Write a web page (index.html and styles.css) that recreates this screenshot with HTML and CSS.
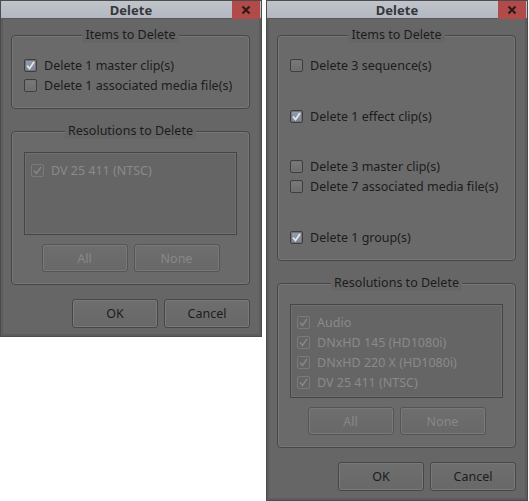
FILE: index.html
```html
<!DOCTYPE html>
<html>
<head>
<meta charset="utf-8">
<link rel="stylesheet" href="styles.css">
</head>
<body>
<div class="page">
  <div class="dialog">
    <div class="titlebar">
      <span class="title">Delete</span>
      <span class="close"><svg width="10" height="10" viewBox="0 0 10 10"><path d="M1.5 1.5 L8.5 8.5 M8.5 1.5 L1.5 8.5" stroke="#2e1c1c" stroke-width="2.2" fill="none"/></svg></span>
    </div>
    <div class="body">
      <div class="group items">
        <div class="group-title">Items to Delete</div>
        <div class="rows">
          <div class="row"><span class="cb checked"></span>Delete 1 master clip(s)</div>
          <div class="row"><span class="cb"></span>Delete 1 associated media file(s)</div>
        </div>
      </div>
      <div class="group res">
        <div class="group-title">Resolutions to Delete</div>
        <div class="list list-short">
          <div class="row disabled"><span class="cb checked"></span>DV 25 411 (NTSC)</div>
        </div>
        <div class="btnrow center">
          <div class="btn disabled">All</div>
          <div class="btn disabled">None</div>
        </div>
      </div>
      <div class="btnrow footer">
        <div class="btn">OK</div>
        <div class="btn">Cancel</div>
      </div>
    </div>
  </div>

  <div class="dialog tall">
    <div class="titlebar">
      <span class="title">Delete</span>
      <span class="close"><svg width="10" height="10" viewBox="0 0 10 10"><path d="M1.5 1.5 L8.5 8.5 M8.5 1.5 L1.5 8.5" stroke="#2e1c1c" stroke-width="2.2" fill="none"/></svg></span>
    </div>
    <div class="body">
      <div class="group items">
        <div class="group-title">Items to Delete</div>
        <div class="rows">
          <div class="row"><span class="cb"></span>Delete 3 sequence(s)</div>
          <div class="spacer s1"></div>
          <div class="row"><span class="cb checked"></span>Delete 1 effect clip(s)</div>
          <div class="spacer s2"></div>
          <div class="row"><span class="cb"></span>Delete 3 master clip(s)</div>
          <div class="row"><span class="cb"></span>Delete 7 associated media file(s)</div>
          <div class="spacer s3"></div>
          <div class="row"><span class="cb checked"></span>Delete 1 group(s)</div>
        </div>
      </div>
      <div class="group res">
        <div class="group-title">Resolutions to Delete</div>
        <div class="list">
          <div class="row disabled"><span class="cb checked"></span>Audio</div>
          <div class="row disabled"><span class="cb checked"></span>DNxHD 145 (HD1080i)</div>
          <div class="row disabled"><span class="cb checked"></span>DNxHD 220 X (HD1080i)</div>
          <div class="row disabled"><span class="cb checked"></span>DV 25 411 (NTSC)</div>
        </div>
        <div class="btnrow center">
          <div class="btn disabled">All</div>
          <div class="btn disabled">None</div>
        </div>
      </div>
      <div class="btnrow footer">
        <div class="btn">OK</div>
        <div class="btn">Cancel</div>
      </div>
    </div>
  </div>
</div>
</body>
</html>
```

FILE: styles.css
```css
* { box-sizing: border-box; }
html, body {
  margin: 0;
  background: #ffffff;
}
body {
  font-family: "Noto Sans", "Open Sans", sans-serif;
  font-size: 12.5px;
  color: #1c1c1c;
}
.page {
  display: flex;
  align-items: flex-start;
  gap: 4px;
}
.dialog {
  width: 262px;
  height: 337px;
  display: flex;
  flex-direction: column;
  background: #666666;
  border: 1px solid #4c4c4c;
}
.dialog.tall {
  height: 501px;
}
.titlebar {
  height: 18px;
  display: grid;
  grid-template-columns: 1fr auto 1fr;
  align-items: center;
  background: linear-gradient(#c0c4cb, #b3b7bf);
  border-bottom: 1px solid #56585c;
}
.title {
  grid-column: 2;
  font-weight: bold;
  font-size: 13px;
  color: #35363a;
  line-height: 18px;
}
.close {
  grid-column: 3;
  justify-self: end;
  margin-right: 1px;
  width: 28px;
  height: 18px;
  margin-top: -1px;
  background: #b34a4a;
  display: flex;
  align-items: center;
  justify-content: center;
}
.body {
  flex: 1;
  display: flex;
  flex-direction: column;
  padding: 16px 11px 0 10px;
  box-shadow: inset 2px 0 0 #5c5c5c, inset -2px 0 0 #5c5c5c, inset 0 -2px 0 #5c5c5c;
}
.group {
  display: flex;
  flex-direction: column;
  background: #6a6a6a;
  border: 1px solid #474747;
  border-radius: 4px;
  box-shadow: inset 0 0 0 1px #777777;
  padding: 0 12px 13px 12px;
}
.group-title {
  align-self: center;
  margin-top: -9px;
  line-height: 16px;
  height: 16px;
  padding: 0 3px;
  background: #666666;
  color: #1c1c1c;
}
.rows {
  margin-top: 12px;
  display: flex;
  flex-direction: column;
}
.row {
  height: 20px;
  display: flex;
  align-items: center;
  gap: 7px;
  white-space: nowrap;
}
.spacer.s1 { height: 31px; }
.spacer.s2 { height: 30px; }
.spacer.s3 { height: 31px; }
.group.res {
  margin-top: 22px;
  padding-bottom: 12px;
}
.cb {
  width: 13px;
  height: 13px;
  flex: none;
  border: 1px solid #3e3e3e;
  border-radius: 2px;
  background: linear-gradient(#7a7a7a, #6c6c6c);
  box-shadow: inset 0 0 0 1px #737373;
}
.cb.checked {
  background-image: url("data:image/svg+xml,%3Csvg xmlns='http://www.w3.org/2000/svg' width='11' height='11' viewBox='0 0 11 11'%3E%3Cpath d='M2 5.5 L4.5 8.5 L9 2' stroke='%23dfe6f0' stroke-width='1.8' fill='none'/%3E%3C/svg%3E"), linear-gradient(#959eae, #7c8494);
  background-repeat: no-repeat;
  background-position: center;
}
.row.disabled {
  color: #8a8a8a;
}
.row.disabled .cb {
  border-color: #7a7a7a;
  background: none;
  box-shadow: none;
}
.row.disabled .cb.checked {
  background-image: url("data:image/svg+xml,%3Csvg xmlns='http://www.w3.org/2000/svg' width='11' height='11' viewBox='0 0 11 11'%3E%3Cpath d='M2 5.5 L4.5 8.5 L9 2' stroke='%23858585' stroke-width='1.6' fill='none'/%3E%3C/svg%3E");
  background-repeat: no-repeat;
  background-position: center;
}
.list {
  margin-top: 13px;
  background: #656565;
  border: 1px solid #454545;
  box-shadow: inset 0 0 0 1px #6f6f6f;
  padding: 7px 6px 5px 6px;
  display: flex;
  flex-direction: column;
}
.list-short {
  height: 83px;
}
.btnrow {
  display: flex;
  gap: 6px;
}
.btnrow.center {
  justify-content: center;
  margin-top: 9px;
}
.btnrow.center .btn {
  height: 28px;
}
.btnrow.footer {
  justify-content: flex-end;
  margin-top: 14px;
}
.btn {
  width: 86px;
  height: 29px;
  display: flex;
  align-items: center;
  justify-content: center;
  background: linear-gradient(#6e6e6e, #686868);
  border: 1px solid #474747;
  border-radius: 3px;
  box-shadow: inset 0 0 0 1px #797979;
  color: #1c1c1c;
}
.btn.disabled {
  color: #888888;
  border-color: #555555;
}
```
